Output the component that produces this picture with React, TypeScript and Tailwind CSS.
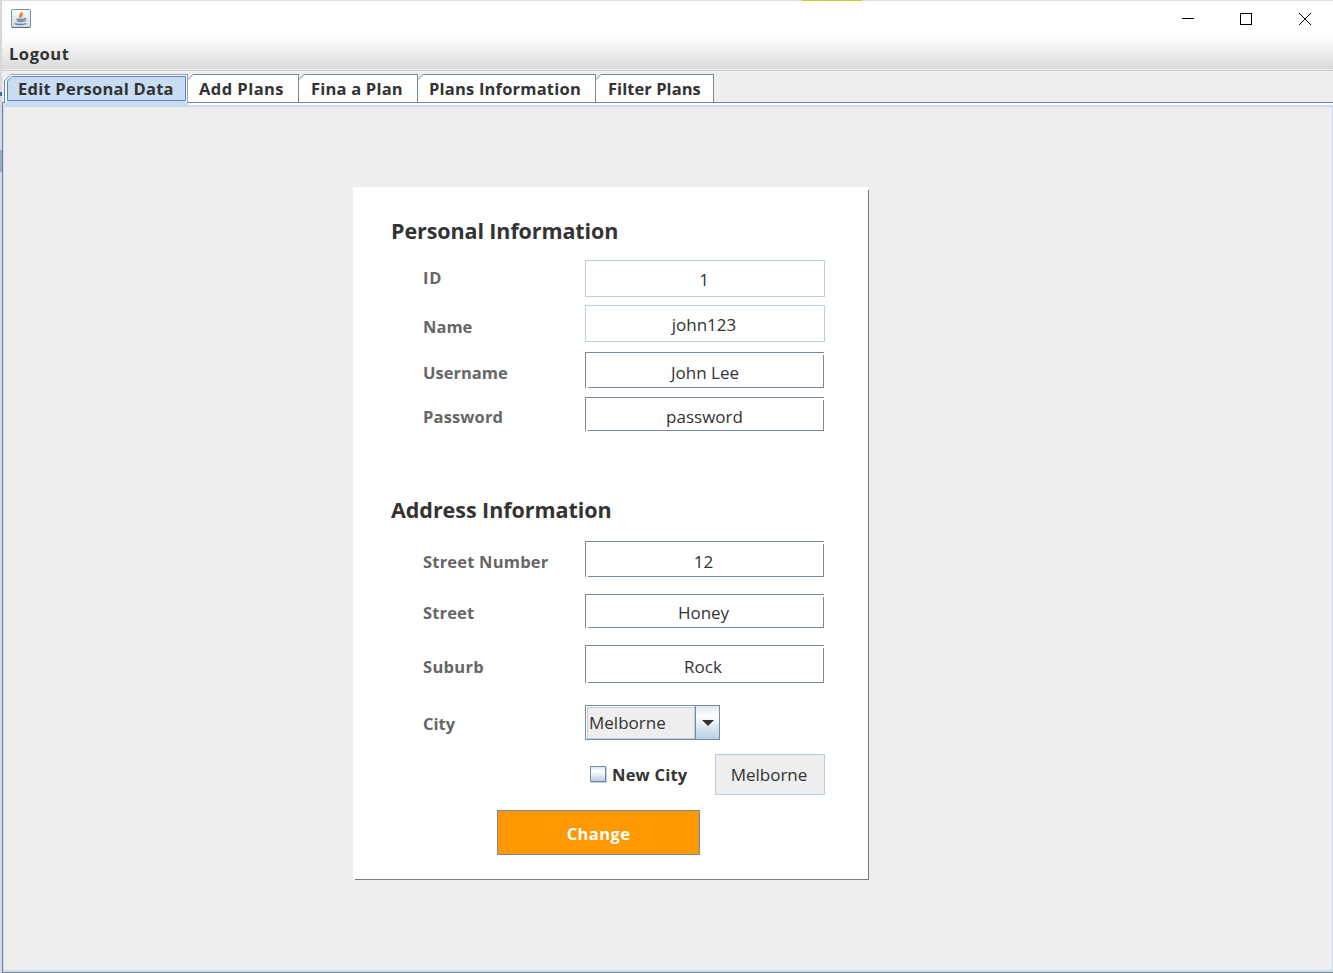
import React from "react";

function Java() {
  return (
    <svg width="20" height="20" viewBox="0 0 20 20" className="block">
      <defs>
        <linearGradient id="jb" x1="0" y1="0" x2="0" y2="1">
          <stop offset="0" stopColor="#fdfdfd" />
          <stop offset="1" stopColor="#cfd8e0" />
        </linearGradient>
      </defs>
      <rect x=".5" y=".5" width="19" height="18" rx="1.5" fill="url(#jb)" stroke="#7d929f" />
      <path d="M.8 18.500h18.400" stroke="#526f85" />
      <path d="M10.700 3c.8 1.800-3 2.400-2 4.300l1 1.700M12 5.300c-1.800.9-2 1.400-1.200 2.700" fill="none" stroke="#ea8535" strokeWidth="1.600" />
      <path d="M5.500 9.500h7.700v1.500c0 1.500-1 2.300-2.500 2.300H8.500c-1.700 0-2.700-1-3-2.300z" fill="#7594ad" />
      <path d="M13 9.500c2.500-.4 2.200 2.200-.4 2.600M3.800 14.700c3 1.200 8.700 1 11.400-.2" fill="none" stroke="#6686a1" strokeWidth="1.300" />
    </svg>
  );
}

const tabs = [
  { name: "Add Plans", w: "w-[111px] pl-[11px]", t: "tracking-[0.45px]" },
  { name: "Fina a Plan", w: "w-[119px] pl-[12px]", t: "tracking-[0.2px]" },
  { name: "Plans Information", w: "w-[178px] pl-[11px]", t: "tracking-[0.2px]" },
  { name: "Filter Plans", w: "w-[118px] pl-[12px]", t: "tracking-[0.05px]" },
];

function Tab({ name, w, t }: { name: string; w: string; t: string }) {
  return (
    <div className={`relative h-[28px] border-t border-r border-[#7a8a99] bg-white pt-[4px] ${w} ${t}`}>
      <svg className="absolute -top-px left-0" width="7" height="7">
        <path d="M0 0H6L0 6z" fill="#eee" />
        <path d="M0 5.500L5.500 0" stroke="#7a8a99" />
      </svg>
      {name}
    </div>
  );
}

function Field({ text, box, soft }: { text: string; box: string; soft?: boolean }) {
  return (
    <div className={`relative border text-center ${soft ? "w-[240px] border-[#b8cfe5] pr-[2px]" : "w-[239px] border-[#7a8a99]"} ${box}`}>
      {text}
      {!soft && <span className="absolute -right-px top-0 h-[2px] w-px bg-white" />}
      {!soft && <span className="absolute -bottom-px left-0 h-px w-[2px] bg-white" />}
    </div>
  );
}

function Row({ label, row, pad, children }: { label: string; row: string; pad: string; children: React.ReactNode }) {
  return (
    <div className={`flex items-start ${row}`}>
      <div className={`w-[162px] shrink-0 text-[16.5px] font-bold text-[#666] ${pad}`}>{label}</div>
      {children}
    </div>
  );
}

export default function App() {
  return (
    <div className="flex h-[973px] w-[1333px] overflow-hidden bg-[#eee] font-['Open_Sans','Noto_Sans',sans-serif] text-[17px] leading-[20px] text-[#333] whitespace-nowrap">
      <div className="flex w-[2px] shrink-0 flex-col bg-[#d8d8d8]">
        <div className="mt-[92px] h-[4px] bg-[#3c6fb0]" />
        <div className="mt-[54px] h-[22px] bg-[#a3a9b8]" />
      </div>
      <div className="flex w-[1331px] flex-col">
        <div className="flex h-px bg-[#dfdfdf]"><div className="ml-[800px] w-[60px] bg-[#c8c837]" /></div>
        <div className="flex h-[36px] justify-between bg-white">
          <div className="pl-[9px] pt-[8px]"><Java /></div>
          <svg width="151" height="36" fill="none" stroke="#000" shapeRendering="crispEdges">
            <path d="M0 17.500h12M58.500 12.500h11v11h-11z" />
            <path d="M117 12l12 12M129 12l-12 12" shapeRendering="auto" />
          </svg>
        </div>
        <div className="h-[32px] bg-linear-to-b from-white to-[#dadada] pl-[7px] pt-[7px] text-[16.5px] font-bold tracking-[0.55px]">Logout</div>
        <div className="h-px bg-[#eee]" />
        <div className="h-px bg-[#ccc]" />
        <div className="flex h-[31px] pt-[3px] text-[16.5px] font-bold">
          <div className="relative z-10 ml-[2px] h-[33px] w-[184px] bg-[#c8ddf2]">
            <svg className="absolute left-0 top-0" width="184" height="33" fill="none">
              <path d="M0 0H8L3 5V29H0z" fill="#eee" />
              <path d="M.5 29V7L7 .5H183.500V28.500" stroke="#6382bf" />
              <path d="M2 29V7.500L7.500 1.500H182.500V28" stroke="#fff" strokeWidth="1.500" />
              <path d="M3.500 26.500V7L8 2.500H181.500V26.500z" stroke="#6382bf" />
            </svg>
            <div className="relative pl-[14px] pt-[5px] tracking-[0.23px]">Edit Personal Data</div>
          </div>
          {tabs.map((t) => <Tab key={t.name} {...t} />)}
        </div>
        <div className="flex h-[871px] flex-col border-b border-l border-t border-b-[#7a8a99] border-l-[#6382bf] border-t-[#6382bf]">
          <div className="h-[2px] bg-white" />
          <div className="h-[867px] border-x border-b-2 border-t-2 border-[#c8ddf2] pl-[349px] pt-[80px]">
            <div className="relative h-[693px] w-[516px] border-b border-r border-[#7a7a7a] bg-white">
              <span className="absolute -right-px top-0 h-[3px] w-px bg-white" />
              <span className="absolute -bottom-px left-0 h-px w-[2px] bg-white" />
              <h2 className="pl-[38px] pt-[30px] text-[21.5px] font-bold leading-[28px] tracking-[-0.1px]">Personal Information</h2>
              <div className="pl-[70px]">
                <Row label="ID" row="mt-[15px] h-[45px]" pad="pt-[8px] tracking-[0.8px]"><Field soft text="1" box="h-[37px] pt-[9px]" /></Row>
                <Row label="Name" row="h-[47px]" pad="pt-[12px]"><Field soft text="john123" box="h-[37px] pt-[9px]" /></Row>
                <Row label="Username" row="h-[45px]" pad="pt-[11px]"><Field text="John Lee" box="h-[36px] pt-[10px] pl-px" /></Row>
                <Row label="Password" row="h-[34px]" pad="pt-[10px] tracking-[0.15px]"><Field text="password" box="h-[34px] pt-[9px]" /></Row>
              </div>
              <h2 className="pl-[38px] pt-[65px] text-[21.5px] font-bold leading-[28px] tracking-[-0.05px]">Address Information</h2>
              <div className="pl-[70px]">
                <Row label="Street Number" row="mt-[17px] h-[53px]" pad="pt-[11px] tracking-[0.2px]"><Field text="12" box="h-[36px] pt-[10px] pr-[2px]" /></Row>
                <Row label="Street" row="h-[51px]" pad="pt-[9px] tracking-[0.15px]"><Field text="Honey" box="h-[34px] pt-[8px] pr-[2px]" /></Row>
                <Row label="Suburb" row="h-[60px]" pad="pt-[12px] tracking-[0.3px]"><Field text="Rock" box="h-[38px] pt-[11px] pr-[3px]" /></Row>
                <Row label="City" row="h-[35px]" pad="pt-[9px]">
                  <div className="flex h-[35px] w-[135px] border border-[#7a8a99]">
                    <div className="m-px mr-0 h-[32px] w-[108px] border border-[#b8cfe5] bg-[#eee] pl-px pt-[5px]">Melborne</div>
                    <div className="flex flex-1 items-center justify-center border-l border-[#7a8a99] bg-linear-to-b from-[#dde8f3] via-white via-30% to-[#b8cfe5]">
                      <svg width="12" height="6"><path d="M0 0h12L6 6z" fill="#333" /></svg>
                    </div>
                  </div>
                </Row>
              </div>
              <div className="mt-[14px] flex pl-[237px]">
                <div className="mt-[12px] h-[16px] w-[16px] border border-[#7a8a99] bg-linear-to-b from-[#dde8f3] via-white via-30% to-[#b8cfe5] shadow-[1px_1px_0_#b8cfe5]" />
                <div className="w-[109px] pl-[6px] pt-[11px] text-[16.5px] font-bold tracking-[0.22px]">New City</div>
                <div className="h-[41px] w-[110px] border border-[#b8cfe5] bg-[#eee] pr-[2px] pt-[10px] text-center">Melborne</div>
              </div>
              <button className="ml-[144px] mt-[15px] block h-[45px] w-[203px] border border-[#7a8a99] bg-[#ff9900] pt-[3px] text-center text-[16.5px] font-bold tracking-[0.4px] text-white">Change</button>
            </div>
          </div>
        </div>
      </div>
    </div>
  );
}
